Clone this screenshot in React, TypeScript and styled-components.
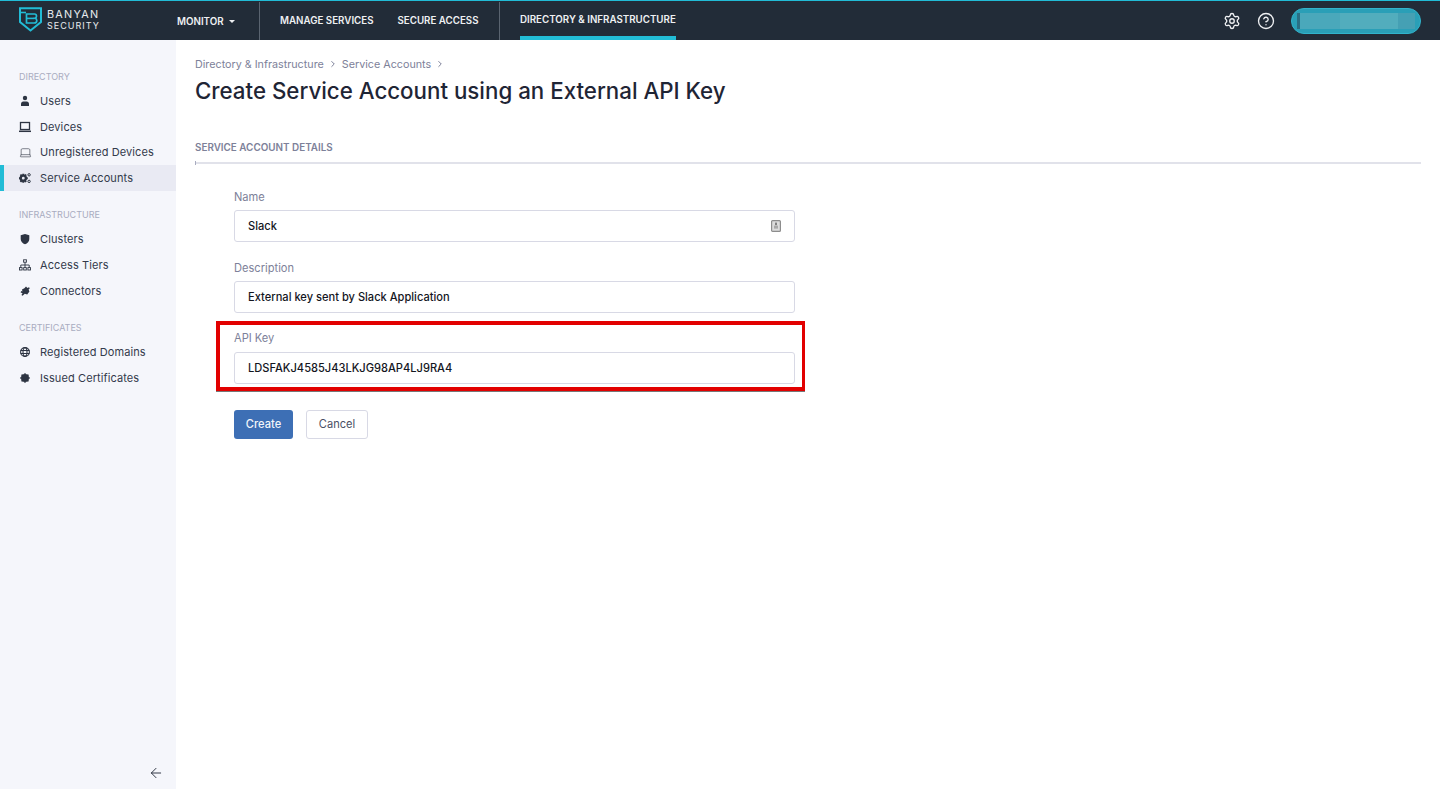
import React from 'react';
import styled, { createGlobalStyle } from 'styled-components';
import { ArrowLeft, ChevronRight, CircleHelp, Laptop, Settings } from 'lucide-react';

const GlobalStyle = createGlobalStyle`
  html, body {
    margin: 0;
    padding: 0;
    background: #fff;
    font-family: Inter, "Liberation Sans", sans-serif;
  }
  * { box-sizing: border-box; }
`;

const navy = '#222c38';
const cyan = '#22bcd6';

const Logo = () => (
  <svg width="23" height="25" viewBox="0 0 23 25" fill="none">
    <path d="M1 1.2H22V15L11.5 23.5L1 15V1.2Z" stroke={cyan} strokeWidth="2" />
    <path d="M1 5.5H7" stroke={cyan} strokeWidth="1.6" />
    <path d="M7.5 7H15.5C17 7 17.5 8 17.5 9.2C17.5 10.2 17 11 16 11.3C17.2 11.6 17.8 12.4 17.8 13.5C17.8 15 16.8 16 15.2 16H7.5V7Z" stroke={cyan} strokeWidth="1.7" />
    <path d="M7.5 11.4H15.5" stroke={cyan} strokeWidth="1.6" />
  </svg>
);

const UserIcon = () => (
  <svg width="12" height="12" viewBox="0 0 12 12" fill="currentColor">
    <circle cx="6" cy="3" r="2.2" />
    <path d="M2 11V8.8C2 7.4 3 6.4 4.2 6.4H7.8C9 6.4 10 7.4 10 8.8V11H2Z" />
  </svg>
);

const DeviceIcon = () => (
  <svg width="12" height="12" viewBox="0 0 12 12" fill="none" stroke="currentColor">
    <rect x="1.5" y="1.5" width="9" height="7" strokeWidth="1.3" />
    <path d="M0 10.3H12" strokeWidth="1.5" />
  </svg>
);

const CogsIcon = () => (
  <svg width="12" height="12" viewBox="0 0 12 12" fill="currentColor">
    <circle cx="4.3" cy="6.2" r="2.6" fill="none" stroke="currentColor" strokeWidth="2.4" />
    <path d="M3.3 1.7H5.3V3.6H3.3ZM3.3 8.8H5.3V10.8H3.3ZM-.1 5.2H1.8V7.2H-.1ZM6.9 5.2H8.8V7.2H6.9ZM.8 2.9L2.2 1.9L3.2 3.2L1.8 4.2ZM5.4 9.2L6.8 8.2L7.8 9.5L6.4 10.5ZM.8 9.5L1.8 8.2L3.2 9.2L2.2 10.5ZM5.4 3.2L6.4 1.9L7.8 2.9L6.8 4.2Z" />
    <circle cx="10.1" cy="2.8" r="1.2" fill="none" stroke="currentColor" strokeWidth="1" />
    <circle cx="10.1" cy="9.4" r="1.2" fill="none" stroke="currentColor" strokeWidth="1" />
  </svg>
);

const ShieldIcon = () => (
  <svg width="12" height="12" viewBox="0 0 12 12" fill="currentColor">
    <path d="M6 1L10.3 2.2V6C10.3 8.4 8.5 10.4 6 11.2C3.5 10.4 1.7 8.4 1.7 6V2.2L6 1Z" />
  </svg>
);

const TiersIcon = () => (
  <svg width="12" height="12" viewBox="0 0 12 12" fill="none" stroke="currentColor" strokeWidth=".9">
    <rect x="4.6" y=".8" width="2.8" height="2.4" />
    <rect x=".5" y="8.6" width="2.6" height="2.4" />
    <rect x="4.7" y="8.6" width="2.6" height="2.4" />
    <rect x="8.9" y="8.6" width="2.6" height="2.4" />
    <path d="M6 3.2V8.6M1.8 8.6V6H10.2V8.6" />
  </svg>
);

const ConnectorIcon = () => (
  <svg width="12" height="12" viewBox="0 0 12 12" fill="currentColor">
    <path d="M7 1.5L8.4 3.1L10 2.2L10.8 3.2L9.6 4.4L10.4 6.4L8.2 9.4L5.8 8.8L3.6 10.8L2.4 10L3.6 8.2L1.6 7.4L2.2 6L3.4 6.4L3 4.4L5.4 3.2Z" />
  </svg>
);

const GlobeIcon = () => (
  <svg width="12" height="12" viewBox="0 0 12 12" fill="none" stroke="currentColor" strokeWidth="1.1">
    <circle cx="6" cy="6" r="4.4" />
    <ellipse cx="6" cy="6" rx="2" ry="4.4" />
    <path d="M1.6 4.5H10.4M1.6 7.5H10.4" />
  </svg>
);

const BadgeIcon = () => (
  <svg width="12" height="12" viewBox="0 0 12 12" fill="currentColor">
    <circle cx="6" cy="6" r="4" />
    <path d="M6 .9L7.3 2.2H4.7ZM6 11.1L7.3 9.8H4.7ZM.9 6L2.2 7.3V4.7ZM11.1 6L9.8 7.3V4.7ZM2.4 2.4H4.2L2.4 4.2ZM9.6 2.4V4.2L7.8 2.4ZM2.4 9.6V7.8L4.2 9.6ZM9.6 9.6H7.8L9.6 7.8Z" />
  </svg>
);

const ContactIcon = () => (
  <svg width="10" height="12" viewBox="0 0 10 12">
    <rect x=".6" y=".6" width="8.8" height="10.8" rx="1" fill="#dcdcdc" stroke="#8d8d8d" strokeWidth="1.2" />
    <rect x="4" y="2.6" width="2" height="2.6" fill="#7f7f7f" />
    <rect x="3" y="5.6" width="4" height="3" fill="#a8a8a8" />
  </svg>
);

const sidebar = [
  {
    title: 'DIRECTORY',
    items: [
      { label: 'Users', icon: <UserIcon />, top: 0 },
      { label: 'Devices', icon: <DeviceIcon />, top: 0 },
      { label: 'Unregistered Devices', icon: <Laptop size={13} strokeWidth={1.1} />, top: -1 },
      { label: 'Service Accounts', icon: <CogsIcon />, top: 0, active: true },
    ],
  },
  {
    title: 'INFRASTRUCTURE',
    items: [
      { label: 'Clusters', icon: <ShieldIcon />, top: 0 },
      { label: 'Access Tiers', icon: <TiersIcon />, top: 0 },
      { label: 'Connectors', icon: <ConnectorIcon />, top: 0 },
    ],
  },
  {
    title: 'CERTIFICATES',
    items: [
      { label: 'Registered Domains', icon: <GlobeIcon />, top: 0 },
      { label: 'Issued Certificates', icon: <BadgeIcon />, top: 0 },
    ],
  },
];

const App = () => {
  return (
    <Page>
      <GlobalStyle />
      <TopBar>
        <Brand>
          <Logo />
          <BrandText>
            <BrandName>BANYAN</BrandName>
            <BrandSub>SECURITY</BrandSub>
          </BrandText>
        </Brand>
        <MonitorGroup>
          <NavLink>MONITOR</NavLink>
          <Caret />
        </MonitorGroup>
        <ManageGroup>
          <NavLink>MANAGE SERVICES</NavLink>
          <NavLink>SECURE ACCESS</NavLink>
        </ManageGroup>
        <DirectoryGroup>
          <ActiveNavLink>DIRECTORY &amp; INFRASTRUCTURE</ActiveNavLink>
        </DirectoryGroup>
        <TopRight>
          <Settings size={18} strokeWidth={1.8} />
          <CircleHelp size={18} strokeWidth={1.8} />
          <UserPill>
            <PillMark />
            <PillName />
          </UserPill>
        </TopRight>
      </TopBar>

      <Body>
        <Sidebar>
          {sidebar.map((section) => (
            <SideSection key={section.title}>
              <SideTitle>{section.title}</SideTitle>
              {section.items.map((item) => (
                <SideRow key={item.label} $active={item.active} $shift={item.top}>
                  <SideIcon>{item.icon}</SideIcon>
                  {item.label}
                </SideRow>
              ))}
            </SideSection>
          ))}
          <CollapseRow>
            <ArrowLeft size={16} strokeWidth={1.4} />
          </CollapseRow>
        </Sidebar>

        <Main>
          <Crumbs>
            <span>Directory &amp; Infrastructure</span>
            <ChevronRight size={10} strokeWidth={2.4} />
            <span>Service Accounts</span>
            <ChevronRight size={10} strokeWidth={2.4} />
          </Crumbs>
          <Title>Create Service Account using an External API Key</Title>
          <SectionHead>SERVICE ACCOUNT DETAILS</SectionHead>
          <Form>
            <Field>
              <FieldLabel>Name</FieldLabel>
              <InputBox>
                Slack
                <ContactIcon />
              </InputBox>
            </Field>
            <Field>
              <FieldLabel>Description</FieldLabel>
              <InputBox>External key sent by Slack Application</InputBox>
            </Field>
            <Field>
              <FieldLabel $raise={1}>API Key</FieldLabel>
              <InputBox>LDSFAKJ4585J43LKJG98AP4LJ9RA4</InputBox>
              <Highlight />
            </Field>
            <Actions>
              <PrimaryButton>Create</PrimaryButton>
              <GhostButton>Cancel</GhostButton>
            </Actions>
          </Form>
        </Main>
      </Body>
    </Page>
  );
};

const Page = styled.div`
  width: 1440px;
  height: 789px;
  display: flex;
  flex-direction: column;
  overflow: hidden;
`;

const TopBar = styled.header`
  height: 40px;
  flex: none;
  display: flex;
  background: ${navy};
  border-top: 1px solid ${cyan};
  color: #fff;
`;

const Brand = styled.div`
  width: 177px;
  padding: 6px 0 0 19px;
  display: flex;
  gap: 5px;
`;

const BrandText = styled.div`
  display: flex;
  flex-direction: column;
  padding-top: 2px;
  color: #e8ebee;
  line-height: 11px;
`;

const BrandName = styled.span`
  font-size: 10.8px;
  font-weight: 400;
  letter-spacing: 1.25px;
`;

const BrandSub = styled.span`
  font-size: 9px;
  font-weight: 400;
  letter-spacing: 1px;
`;

const MonitorGroup = styled.div`
  width: 83px;
  height: 38px;
  margin-top: 1px;
  display: flex;
  align-items: center;
  gap: 5px;
  border-right: 1px solid #5a6470;
`;

const NavLink = styled.span`
  font-size: 9.75px;
  font-weight: 600;
  color: #eef0f2;
`;

const Caret = styled.span`
  width: 0;
  height: 0;
  border-left: 3px solid transparent;
  border-right: 3px solid transparent;
  border-top: 3px solid #eef0f2;
`;

const ManageGroup = styled.div`
  width: 240px;
  height: 38px;
  margin-top: 1px;
  padding: 0 0 1px 20px;
  display: flex;
  align-items: center;
  gap: 24px;
  border-right: 1px solid #5a6470;
`;

const DirectoryGroup = styled.div`
  margin-left: 20px;
  height: 39px;
  display: flex;
`;

const ActiveNavLink = styled(NavLink)`
  display: flex;
  align-items: center;
  padding-top: 2px;
  border-bottom: 4px solid ${cyan};
`;

const TopRight = styled.div`
  margin-left: auto;
  padding: 1px 19px 0 0;
  display: flex;
  align-items: center;
  gap: 16px;
  color: #eef0f2;
`;

const UserPill = styled.div`
  width: 130px;
  height: 26px;
  margin-top: -1px;
  padding: 4px 5px;
  display: flex;
  background: #2a9fb7;
  border: 1px solid #31b4cc;
  border-radius: 13px;
`;

const PillMark = styled.span`
  width: 3px;
  background: #2a6f84;
`;

const PillName = styled.span`
  flex: 1;
  background: linear-gradient(90deg, #4aa8bb 0 35%, #52adbd 35% 85%, #45a0b4 85%);
`;

const Body = styled.div`
  flex: 1;
  display: flex;
  min-height: 0;
`;

const Sidebar = styled.aside`
  width: 176px;
  flex: none;
  padding-top: 30px;
  display: flex;
  flex-direction: column;
  background: #f5f6fb;
`;

const SideSection = styled.section`
  margin-bottom: 17px;
`;

const SideTitle = styled.div`
  height: 14px;
  padding-left: 19px;
  margin-bottom: 4px;
  font-size: 9px;
  line-height: 14px;
  color: #a9acc0;
`;

const SideRow = styled.div<{ $active?: boolean; $shift: number }>`
  height: 26px;
  margin-top: ${(p) => p.$shift}px;
  padding-left: ${(p) => (p.$active ? 15 : 19)}px;
  display: flex;
  align-items: center;
  font-size: 11px;
  letter-spacing: 0.1px;
  color: #333a4b;
  border-left: ${(p) => (p.$active ? `4px solid ${cyan}` : 'none')};
  background: ${(p) => (p.$active ? '#e9eaf3' : 'transparent')};
`;

const SideIcon = styled.span`
  width: 21px;
  display: flex;
  color: #2d3442;
`;

const CollapseRow = styled.div`
  margin-top: auto;
  height: 24px;
  padding-right: 12px;
  display: flex;
  justify-content: flex-end;
  color: #262c3a;
`;

const Main = styled.main`
  flex: 1;
  padding: 17px 19px 0;
`;

const Crumbs = styled.div`
  height: 14px;
  display: flex;
  align-items: center;
  gap: 4px;
  font-size: 10.75px;
  color: #7d8199;
`;

const Title = styled.h1`
  margin: 4px 0 0;
  height: 32px;
  font-size: 22.3px;
  line-height: 32px;
  font-weight: 500;
  color: #1f2535;
`;

const SectionHead = styled.div`
  position: relative;
  height: 28px;
  margin-top: 29px;
  padding-top: 5px;
  font-size: 9.9px;
  font-weight: 600;
  line-height: 12px;
  color: #7d8199;
  border-bottom: 2px solid #e1e2ea;

  &::after {
    content: '';
    position: absolute;
    left: 0;
    bottom: -3px;
    width: 1px;
    height: 4px;
    background: #a9acc0;
  }
`;

const Form = styled.div`
  width: 561px;
  margin: 27px 0 0 39px;
`;

const Field = styled.div`
  position: relative;
  margin-bottom: 20px;
`;

const FieldLabel = styled.div<{ $raise?: number }>`
  height: 12px;
  margin-bottom: 7px;
  font-size: 11.1px;
  line-height: 12px;
  color: #7d8199;
  transform: translateY(${(p) => -(p.$raise ?? 0)}px);
`;

const InputBox = styled.div`
  height: 32px;
  padding: 0 13px;
  display: flex;
  align-items: center;
  justify-content: space-between;
  font-size: 11.1px;
  font-weight: 500;
  color: #14161e;
  border: 1px solid #d8d9e5;
  border-radius: 3px;
`;

const Highlight = styled.div`
  position: absolute;
  top: -12px;
  left: -18px;
  right: -10px;
  bottom: -7px;
  border: 4px solid #e20000;
  border-right-width: 3px;
  box-shadow: 0 1px 0 #777;
`;

const Actions = styled.div`
  margin-top: 26px;
  display: flex;
  gap: 13px;
`;

const PrimaryButton = styled.button`
  width: 59px;
  height: 29px;
  padding: 0 0 1px;
  font: 500 11.1px Inter, sans-serif;
  color: #f2f5fa;
  background: #3d6fb5;
  border: none;
  border-radius: 3px;
`;

const GhostButton = styled.button`
  width: 62px;
  height: 29px;
  padding: 0 0 1px;
  font: 400 11.1px Inter, sans-serif;
  color: #4a5064;
  background: #fff;
  border: 1px solid #d8d9e5;
  border-radius: 3px;
`;

export default App;
